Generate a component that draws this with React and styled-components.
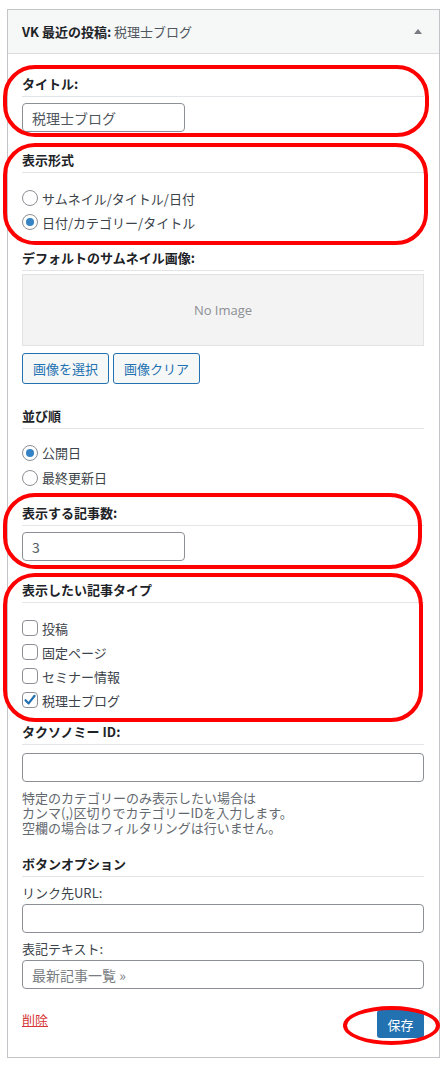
import React from 'react'
import styled, { createGlobalStyle } from 'styled-components'

const GlobalStyle = createGlobalStyle`
  body {
    margin: 0;
    background: #fff;
    font-family: "Noto Sans CJK JP", "Liberation Sans", sans-serif;
    color: #3c434a;
  }
`

const App = () => {
  return (
    <Page>
      <GlobalStyle />
      <Widget>
        <Header>
          <HeaderTitle>
            <strong>VK 最近の投稿:</strong> <span>税理士ブログ</span>
          </HeaderTitle>
          <svg width='8' height='5' viewBox='0 0 8 5'>
            <polygon points='4,0 8,5 0,5' fill='#787c82' />
          </svg>
        </Header>

        <Body>
          <SectionLabel $top={21}>タイトル:</SectionLabel>
          <TextInput $top={6} $short defaultValue='税理士ブログ' />

          <SectionLabel $top={19}>表示形式</SectionLabel>
          <OptionList $top={13} $row={24}>
            <Option>
              <Radio />
              サムネイル/タイトル/日付
            </Option>
            <Option>
              <Radio $checked />
              日付/カテゴリー/タイトル
            </Option>
          </OptionList>

          <SectionLabel $top={15}>デフォルトのサムネイル画像:</SectionLabel>
          <ImageBox>No Image</ImageBox>
          <ButtonRow>
            <SecondaryButton>画像を選択</SecondaryButton>
            <SecondaryButton>画像クリア</SecondaryButton>
          </ButtonRow>

          <SectionLabel $top={23}>並び順</SectionLabel>
          <OptionList $top={11} $row={25}>
            <Option>
              <Radio $checked />
              公開日
            </Option>
            <Option>
              <Radio />
              最終更新日
            </Option>
          </OptionList>

          <SectionLabel $top={14}>表示する記事数:</SectionLabel>
          <TextInput $top={6} $short defaultValue='3' />

          <SectionLabel $top={20}>表示したい記事タイプ</SectionLabel>
          <OptionList $top={13} $row={24}>
            {postTypes.map((t) => (
              <Option key={t.name}>
                <Checkbox>
                  {t.checked && (
                    <svg width='14' height='14' viewBox='0 0 14 14'>
                      <path d='M2.5 7.2 L5.6 10.4 L11.6 2.8' fill='none' stroke='#2271b1' strokeWidth='2.2' strokeLinecap='round' strokeLinejoin='round' />
                    </svg>
                  )}
                </Checkbox>
                {t.name}
              </Option>
            ))}
          </OptionList>

          <SectionLabel $top={11}>タクソノミー ID:</SectionLabel>
          <TextInput $top={8} />
          <Description>
            <Line>特定のカテゴリーのみ表示したい場合は</Line>
            <Line>カンマ(,)区切りでカテゴリーIDを入力します。</Line>
            <Line>空欄の場合はフィルタリングは行いません。</Line>
          </Description>

          <SectionLabel $top={20}>ボタンオプション</SectionLabel>
          <FieldLabel>リンク先URL:</FieldLabel>
          <TextInput $top={2} />
          <FieldLabel>表記テキスト:</FieldLabel>
          <TextInput $top={2} placeholder='最新記事一覧 »' />

          <Footer>
            <DeleteLink>削除</DeleteLink>
            <PrimaryButton>保存</PrimaryButton>
          </Footer>
        </Body>
      </Widget>

      <Marker style={{ left: 3, top: 65, width: 426, height: 72 }} />
      <Marker style={{ left: 3, top: 143, width: 425, height: 102 }} />
      <Marker style={{ left: 3, top: 493, width: 419, height: 76 }} />
      <Marker style={{ left: 3, top: 573, width: 420, height: 149 }} />
      <Marker $ellipse style={{ left: 343, top: 1006, width: 97, height: 39 }} />
    </Page>
  )
}

const postTypes = [
  { name: '投稿', checked: false },
  { name: '固定ページ', checked: false },
  { name: 'セミナー情報', checked: false },
  { name: '税理士ブログ', checked: true }
]

const Page = styled.div`
position: relative;
width: 447px;
min-height: 1067px;
box-sizing: border-box;
padding: 9px 0 0 7px;
`

const Widget = styled.div`
width: 433px;
box-sizing: border-box;
background: #fff;
border: 1px solid #c3c4c7;
`

const Header = styled.div`
height: 43px;
display: flex;
align-items: center;
justify-content: space-between;
padding: 0 17px 0 14px;
background: #f6f7f7;
border-bottom: 1px solid #dcdcde;
`

const HeaderTitle = styled.div`
font-size: 13px;
line-height: 18px;
color: #1d2327;

strong {
  font-weight: 700;
}

span {
  color: #50575e;
}
`

const Body = styled.div`
padding: 0 15px 19px 14px;
`

const SectionLabel = styled.div`
margin-top: ${(p) => p.$top}px;
padding-bottom: 3px;
border-bottom: 1px solid #e2e4e7;
font-size: 13px;
line-height: 18px;
font-weight: 700;
color: #1d2327;
`

const FieldLabel = styled.div`
margin-top: 7px;
font-size: 13px;
line-height: 18px;
color: #3c434a;
`

const TextInput = styled.input`
display: block;
margin-top: ${(p) => p.$top}px;
width: ${(p) => (p.$short ? '163px' : '100%')};
height: 29px;
box-sizing: border-box;
padding: 0 9px;
border: 1px solid #8c8f94;
border-radius: 4px;
background: #fff;
font-family: inherit;
font-size: 14px;
color: #50575e;
outline: none;

&::placeholder {
  color: #787c82;
}
`

const OptionList = styled.div`
margin-top: ${(p) => p.$top}px;
display: grid;
grid-auto-rows: ${(p) => p.$row}px;
`

const Option = styled.label`
display: flex;
align-items: center;
gap: 4px;
font-size: 13px;
color: #3c434a;
`

const Radio = styled.span`
width: 16px;
height: 16px;
box-sizing: border-box;
border: 1px solid #8c8f94;
border-radius: 50%;
background: #fff;
display: flex;
align-items: center;
justify-content: center;

&::after {
  content: '';
  display: ${(p) => (p.$checked ? 'block' : 'none')};
  width: 8px;
  height: 8px;
  border-radius: 50%;
  background: #3582c4;
}
`

const Checkbox = styled.span`
width: 16px;
height: 16px;
box-sizing: border-box;
border: 1px solid #8c8f94;
border-radius: 4px;
background: #fff;
display: flex;
align-items: center;
justify-content: center;
`

const ImageBox = styled.div`
margin-top: 3px;
height: 72px;
display: flex;
align-items: center;
justify-content: center;
background: #f3f3f3;
border: 1px solid #e2e2e2;
box-sizing: border-box;
font-family: "Open Sans", "Noto Sans", sans-serif;
font-size: 13px;
color: #8c8f94;
`

const ButtonRow = styled.div`
margin-top: 7px;
display: flex;
gap: 4px;
`

const SecondaryButton = styled.button`
height: 31px;
padding: 0 10px;
border: 1px solid #2271b1;
border-radius: 3px;
background: #f6f7f7;
font-family: inherit;
font-size: 13px;
color: #2271b1;
`

const Description = styled.div`
margin-top: 8px;
display: grid;
grid-auto-rows: 15px;
font-size: 13px;
color: #646970;
`

const Line = styled.div`
height: 15px;
line-height: 15px;
white-space: nowrap;
`

const Footer = styled.div`
margin-top: 21px;
display: flex;
justify-content: space-between;
align-items: flex-start;
`

const DeleteLink = styled.a`
margin-top: 1px;
font-size: 13px;
line-height: 18px;
color: #d63638;
text-decoration: underline;
`

const PrimaryButton = styled.button`
width: 47px;
height: 28px;
border: none;
border-radius: 3px;
background: #2271b1;
font-family: inherit;
font-size: 13px;
color: #fff;
`

const Marker = styled.div`
position: absolute;
box-sizing: border-box;
border: 4px solid #ff0000;
border-radius: ${(p) => (p.$ellipse ? '50%' : '32px')};
pointer-events: none;
`

export default App
